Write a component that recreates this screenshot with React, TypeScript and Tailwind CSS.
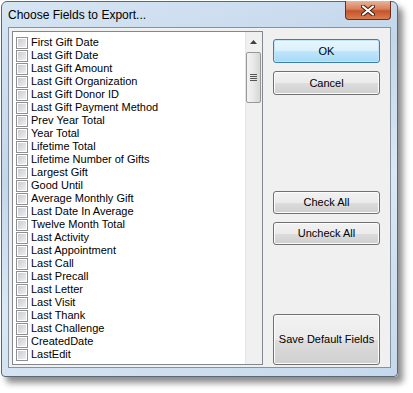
import React from "react";

const fields = [
  "First Gift Date",
  "Last Gift Date",
  "Last Gift Amount",
  "Last Gift Organization",
  "Last Gift Donor ID",
  "Last Gift Payment Method",
  "Prev Year Total",
  "Year Total",
  "Lifetime Total",
  "Lifetime Number of Gifts",
  "Largest Gift",
  "Good Until",
  "Average Monthly Gift",
  "Last Date In Average",
  "Twelve Month Total",
  "Last Activity",
  "Last Appointment",
  "Last Call",
  "Last Precall",
  "Last Letter",
  "Last Visit",
  "Last Thank",
  "Last Challenge",
  "CreatedDate",
  "LastEdit",
];

function CheckBox() {
  return (
    <span className="flex h-[12px] w-[12px] shrink-0 items-center justify-center border border-[#8f8f8f] bg-white">
      <span className="h-[8px] w-[8px] bg-[linear-gradient(135deg,#c9ccd1,#eeeff1)]" />
    </span>
  );
}

function WinButton({ label, primary, className }: { label: string; primary?: boolean; className?: string }) {
  return (
    <button
      className={
        "flex w-[107px] items-center justify-center rounded-[3px] border text-[11px] text-black " +
        (primary
          ? "border-[#3c7fb1] bg-[linear-gradient(180deg,#eaf6fd_0%,#d9f0fc_50%,#bee6fd_51%,#a7d9f5_100%)] shadow-[inset_0_0_0_1px_#c4e5f6]"
          : "border-[#707070] bg-[linear-gradient(180deg,#f2f2f2_0%,#ebebeb_50%,#dddddd_51%,#cfcfcf_100%)] shadow-[inset_0_0_0_1px_#fcfcfc]") +
        " " +
        (className ?? "")
      }
    >
      {label}
    </button>
  );
}

export default function App() {
  return (
    <div className="h-[393px] w-[413px] bg-white pl-[1px] pt-[1px] font-['Liberation_Sans',Arial,sans-serif]">
      <div className="relative flex h-[376px] w-[397px] flex-col rounded-t-[6px] rounded-b-[4px] border border-[#5b6775] bg-[linear-gradient(160deg,#d7e5f3_0%,#c3d7eb_35%,#dbe7f4_60%,#c6d9ec_100%)] shadow-[5px_6px_6px_rgba(0,0,0,0.45)]">
        <div className="flex h-[25px] items-center pl-[6px] text-[12px] text-black">Choose Fields to Export...</div>

        <div className="absolute right-[6px] top-[-1px] flex h-[19px] w-[46px] items-center justify-center rounded-b-[4px] border border-t-0 border-[#6b2d17] bg-[linear-gradient(180deg,#e8b39a_0%,#d9805b_45%,#c5532b_55%,#d97d4f_100%)]">
          <svg width="14" height="11" viewBox="0 0 14 11">
            <path d="M2 1.5 L12 9.5 M12 1.5 L2 9.5" stroke="#3b1a10" strokeWidth="4" strokeLinecap="round" />
            <path d="M2 1.5 L12 9.5 M12 1.5 L2 9.5" stroke="#ffffff" strokeWidth="2.2" strokeLinecap="round" />
          </svg>
        </div>

        <div className="ml-[6px] flex h-[341px] w-[383px] border border-[#8592a0] bg-[#f0f0f0] pl-[3px] pt-[3px]">
          <div className="flex h-[334px] w-[251px] border border-[#828790] bg-white">
            <div className="flex flex-1 flex-col pl-[3px] pt-[4px]">
              {fields.map((f) => (
                <div key={f} className="flex h-[13px] items-center gap-[3px] text-[11px] leading-none text-black">
                  <CheckBox />
                  <span>{f}</span>
                </div>
              ))}
            </div>
            <div className="flex w-[17px] flex-col items-center bg-[#f0f0f0] shadow-[inset_1px_0_0_#e6e6e6]">
              <div className="flex h-[20px] items-center justify-center">
                <svg width="7" height="4" viewBox="0 0 7 4">
                  <path d="M0 4 L3.5 0 L7 4 Z" fill="#404040" />
                </svg>
              </div>
              <div className="flex h-[51px] w-[15px] items-center justify-center rounded-[2px] border border-[#979797] bg-[linear-gradient(90deg,#f3f3f3,#e8e8e8_50%,#d6d6d6)]">
                <div className="flex flex-col gap-[1px]">
                  <span className="h-[1px] w-[7px] bg-[#555]" />
                  <span className="h-[1px] w-[7px] bg-[#555]" />
                  <span className="h-[1px] w-[7px] bg-[#555]" />
                  <span className="h-[1px] w-[7px] bg-[#555]" />
                </div>
              </div>
            </div>
          </div>

          <div className="ml-[10px] flex flex-col pt-[8px]">
            <WinButton label="OK" primary className="h-[24px]" />
            <WinButton label="Cancel" className="mt-[8px] h-[24px]" />
            <WinButton label="Check All" className="mt-[96px] h-[23px]" />
            <WinButton label="Uncheck All" className="mt-[8px] h-[23px]" />
            <WinButton label="Save Default Fields" className="mt-[69px] h-[51px]" />
          </div>
        </div>
      </div>
    </div>
  );
}
